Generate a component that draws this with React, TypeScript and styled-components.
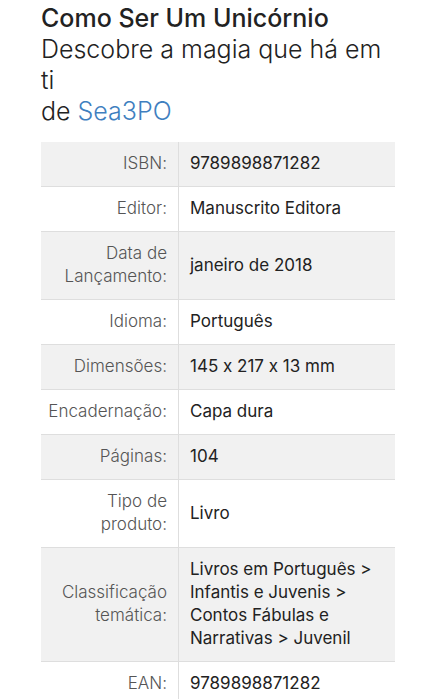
import React from "react";
import styled, { createGlobalStyle } from "styled-components";

const Global = createGlobalStyle`
  html, body { margin: 0; padding: 0; background: #ffffff; }
  body {
    font-family: "Inter", "Open Sans", sans-serif;
    color: #222;
    font-feature-settings: "calt" 0;
  }
`;

const Page = styled.main`
  padding: 3px 41px 0 41px;
`;

const Header = styled.header`
  font-size: 25px;
  line-height: 31px;
  margin-bottom: 15px;
`;

const Title = styled.h1`
  margin: 0;
  font-size: inherit;
  font-weight: 500;
  color: #222;
`;

const Subtitle = styled.div`
  font-weight: 300;
  color: #222;
`;

const Author = styled.div`
  font-weight: 300;
  color: #222;
`;

const AuthorLink = styled.a`
  color: #3f7fbf;
  text-decoration: none;
`;

const Table = styled.dl`
  margin: 0;
  display: grid;
  grid-template-columns: 138px 1fr;
  font-size: 17px;
  line-height: 23px;
`;

const Row = styled.div<{ $shaded: boolean }>`
  display: contents;
  & > * {
    background: ${(p) => (p.$shaded ? "#f1f1f1" : "#ffffff")};
    border-bottom: 1px solid #dedede;
  }
`;

const Label = styled.dt`
  margin: 0;
  padding: 10px 11px 11px 2px;
  text-align: right;
  color: #555;
  font-weight: 300;
  border-right: 1px solid #dedede;
  display: flex;
  align-items: center;
  justify-content: flex-end;
`;

const Value = styled.dd`
  margin: 0;
  padding: 10px 10px 11px 11px;
  color: #222;
  font-weight: 400;
  display: flex;
  align-items: center;
`;

const rows: [string, string][] = [
  ["ISBN:", "9789898871282"],
  ["Editor:", "Manuscrito Editora"],
  ["Data de Lançamento:", "janeiro de 2018"],
  ["Idioma:", "Português"],
  ["Dimensões:", "145 x 217 x 13 mm"],
  ["Encadernação:", "Capa dura"],
  ["Páginas:", "104"],
  ["Tipo de produto:", "Livro"],
  ["Classificação temática:", "Livros em Português > Infantis e Juvenis > Contos Fábulas e Narrativas > Juvenil"],
  ["EAN:", "9789898871282"],
];

export default function App() {
  return (
    <>
      <Global />
      <Page>
        <Header>
          <Title>Como Ser Um Unicórnio</Title>
          <Subtitle>Descobre a magia que há em ti</Subtitle>
          <Author>
            de <AuthorLink href="#">Sea3PO</AuthorLink>
          </Author>
        </Header>
        <Table>
          {rows.map(([k, v], i) => (
            <Row key={k} $shaded={i % 2 === 0}>
              <Label>{k}</Label>
              <Value>{v}</Value>
            </Row>
          ))}
        </Table>
      </Page>
    </>
  );
}
